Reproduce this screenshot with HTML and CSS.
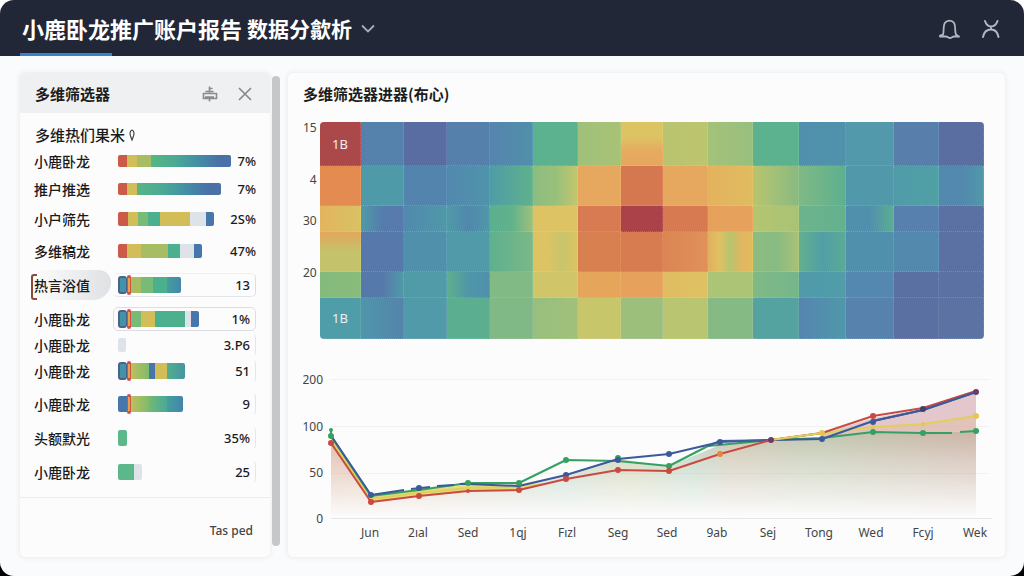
FILE: index.html
```html
<!DOCTYPE html>
<html lang="zh-CN">
<head>
<meta charset="utf-8">
<meta name="viewport" content="width=device-width, initial-scale=1">
<title>小鹿卧龙推广账户报告</title>
<link rel="stylesheet" href="styles.css">
</head>
<body>
<div class="app">
  <header class="topbar">
    <h1 class="topbar-title"><span>小鹿卧龙推广账户报告</span><span class="topbar-sub">数据分歙析</span></h1>
    <button class="icon-button" type="button" aria-label="切换报告">
      <svg width="16" height="16" viewBox="0 0 16 16"><path d="M2 5.5l6 6 6-6" fill="none" stroke="#a9acb8" stroke-width="1.8"/></svg>
    </button>
    <div class="topbar-actions">
      <button class="icon-button" type="button" aria-label="通知">
        <svg width="24" height="24" viewBox="0 0 24 24" fill="none" stroke="#b3b5c0" stroke-width="1.8" stroke-linejoin="round" stroke-linecap="round"><path d="M6 18.500C7.200 16 5.800 10 8 6.800C10 3.800 15 3.800 17 6.800C19 10 17.500 16 19 18.500L22 20.800M6 18.500L3 19.500V20.500H9C10.500 20.500 11.500 22 13 22S15.500 20.500 17 20.500H22"/></svg>
      </button>
      <button class="icon-button" type="button" aria-label="账户">
        <svg width="24" height="24" viewBox="0 0 24 24" fill="none" stroke="#b3b5c0" stroke-width="2" stroke-linecap="round"><path d="M6 5C7 8 9.500 10.500 12 10.500C15 10.500 17.500 8 18.500 5M12 10.500v3M4 21C5 15.500 8 13.500 12 13.500S18.500 15.500 19.500 21"/></svg>
      </button>
    </div>
  </header>

  <main class="content">
    <aside class="panel filter">
      <header class="filter-head">
        <h2 class="panel-title">多维筛选器</h2>
        <button class="icon-button" type="button" aria-label="清除">
          <svg width="18" height="18" viewBox="0 0 18 18" fill="none" stroke="#8a8b8d" stroke-width="1.600"><path d="M8.500 1.500v6M4.500 6.500h8M8.500 3.500h3M2.500 8.500h13v5h-13zM4 12h9M8.500 14v2.500"/></svg>
        </button>
        <button class="icon-button" type="button" aria-label="关闭">
          <svg width="16" height="16" viewBox="0 0 16 16" stroke="#86878a" stroke-width="1.600"><path d="M2 2l12 12M14 2L2 14"/></svg>
        </button>
      </header>
      <h3 class="filter-group">多维热们果米 <svg width="8" height="12" viewBox="0 0 8 12" fill="none" stroke="#444" stroke-width="1.200"><path d="M4 1C6 2 6.500 4 5.500 7L4 11L2.500 7C1.500 4 2 2 4 1z"/></svg></h3>
      <ul class="rows">
        <li class="row row-short"><span class="row-label">小鹿卧龙</span><span class="bar bar-thin"><i class="seg w9 red"></i><i class="seg w10 yellow"></i><i class="seg w14 olive"></i><i class="seg w80 ramp"></i></span><span class="row-value">7%</span></li>
        <li class="row row-short"><span class="row-label">推户推选</span><span class="bar bar-thin"><i class="seg w9 red"></i><i class="seg w10 yellow"></i><i class="seg w84 ramp"></i></span><span class="row-value">7%</span></li>
        <li class="row"><span class="row-label">小户筛先</span><span class="bar bar-mid"><i class="seg w10 red"></i><i class="seg w10 yellow"></i><i class="seg w10 green"></i><i class="seg w12 teal"></i><i class="seg w30 yellow"></i><i class="seg w16 mist"></i><i class="seg w8 blue"></i></span><span class="row-value">2S%</span></li>
        <li class="row"><span class="row-label">多维稿龙</span><span class="bar bar-mid"><i class="seg w9 red"></i><i class="seg w14 yellow"></i><i class="seg w27 olive"></i><i class="seg w12 teal"></i><i class="seg w14 mist"></i><i class="seg w8 blue"></i></span><span class="row-value">47%</span></li>
        <li class="row row-tall"><span class="row-label row-label-active">热言浴值</span><span class="field field-open"><span class="bar bar-thick"><i class="seg w9 sea framed"></i><i class="seg w4 marker"></i><i class="seg w10 olive"></i><i class="seg w12 green"></i><i class="seg w14 teal"></i><i class="seg w14 deep"></i></span><span class="row-value">13</span></span></li>
        <li class="row"><span class="row-label">小鹿卧龙</span><span class="field field-boxed"><span class="bar bar-thick"><i class="seg w9 sea framed"></i><i class="seg w4 marker"></i><i class="seg w10 green"></i><i class="seg w14 yellow"></i><i class="seg w30 teal"></i><i class="seg w6 mist"></i><i class="seg w8 blue"></i></span><span class="row-value">1%</span></span></li>
        <li class="row row-tight"><span class="row-label">小鹿卧龙</span><span class="field field-edge"><span class="bar bar-mid"><i class="seg w8 mist"></i></span><span class="row-value">3.P6</span></span></li>
        <li class="row"><span class="row-label">小鹿卧龙</span><span class="field field-edge"><span class="bar bar-thick"><i class="seg w9 sea framed"></i><i class="seg w4 marker"></i><i class="seg w18 grass"></i><i class="seg w6 blue"></i><i class="seg w12 yellow"></i><i class="seg w18 shore"></i></span><span class="row-value">51</span></span></li>
        <li class="row row-loose"><span class="row-label">小鹿卧龙</span><span class="field field-edge"><span class="bar bar-thick"><i class="seg w9 blue"></i><i class="seg w4 marker"></i><i class="seg w18 grass"></i><i class="seg w18 green-teal"></i><i class="seg w16 deep"></i></span><span class="row-value">9</span></span></li>
        <li class="row row-loose"><span class="row-label">头额默光</span><span class="field field-edge"><span class="bar bar-thick"><i class="seg w9 mint"></i></span><span class="row-value">35%</span></span></li>
        <li class="row row-loose"><span class="row-label">小鹿卧龙</span><span class="field field-edge"><span class="bar bar-thick"><i class="seg w16 mint"></i><i class="seg w8 mist"></i></span><span class="row-value">25</span></span></li>
      </ul>
      <footer class="filter-foot">Tas ped</footer>
    </aside>

    <div class="scroll-track" aria-hidden="true"><div class="scroll-thumb"></div></div>

    <section class="panel report">
      <h2 class="panel-title">多维筛选器进器(布心)</h2>
      <div class="heat">
        <div class="heat-axis"><span>15</span><span>4</span><span>30</span><span>20</span></div>
        <div class="heat-grid" id="heat"></div>
      </div>
      <svg class="trend" viewBox="303 366 689 180" role="img" aria-label="趋势">
        <defs>
          <linearGradient id="tint" x1="331" x2="976" y1="0" y2="0" gradientUnits="userSpaceOnUse">
            <stop offset="0" stop-color="#d9a892"/><stop offset=".2" stop-color="#cdb899"/><stop offset=".36" stop-color="#a9c9b4"/><stop offset=".46" stop-color="#c4c69b"/><stop offset=".56" stop-color="#a8c9b3"/><stop offset=".62" stop-color="#c5b8a0"/><stop offset=".75" stop-color="#b3bc9f"/><stop offset="1" stop-color="#c3a596"/>
          </linearGradient>
          <linearGradient id="fade" x1="0" x2="0" y1="430" y2="517" gradientUnits="userSpaceOnUse">
            <stop offset="0" stop-color="#fff" stop-opacity=".85"/><stop offset="1" stop-color="#fff" stop-opacity="0"/>
          </linearGradient>
          <mask id="fade-mask" maskUnits="userSpaceOnUse" x="303" y="366" width="689" height="180"><rect x="303" y="366" width="689" height="180" fill="url(#fade)"/></mask>
        </defs>
        <path class="rule" d="M331 379.500H989M331 426.500H989M331 473.500H989"/>
        <g mask="url(#fade-mask)"><path fill="url(#tint)" d="M331 436L371 495L419 488L468 483L519 484L566 475L618 459L669 466L720 445L771 440L822 438L873 432L923 433L976 431V518H331z"/></g>
        <path fill="#dcb9bf" fill-opacity=".8" d="M822 434L873 418L923 409L976 392V431L923 433L873 432L822 438z"/>
        <path fill="#ddb36e" fill-opacity=".2" d="M822 434L873 427L923 424L976 416V431L923 433L873 432L822 438z"/>
        <path fill="#e3dc7a" d="M331 438L371 497L419 490L468 485L519 485L545 483L519 490L468 491L419 496L371 502L331 443z"/>
        <path class="axis" d="M331 518.500H992"/>
        <path class="line" stroke="#e0cf5c" d="M331 440L371 499L419 493L468 488L519 487M771 440L822 433L873 427L923 424L976 416"/>
        <path class="line" stroke="#36a062" d="M331 430V436L371 496L419 490L468 483L519 483L566 460L618 461L669 466L708 446L771 440L822 438L873 432L923 433H952M960 432L976 431"/>
        <path class="line" stroke="#3c5a9a" d="M332 437L371 495L404 490M411 489L430 487M437 486L454 485M460 484L468 484L519 486L566 475L618 459L669 454L720 442L771 440L822 439L873 421L923 410L976 392"/>
        <path class="line" stroke="#3f5f9f" d="M708 446L720 441L771 440"/>
        <path class="line" stroke="#c84a40" d="M331 443L371 502L419 496L468 491L519 490L566 479L618 470L669 471L720 454L771 440L822 433L873 416L923 408L976 391"/>
        <path class="line" stroke="#3c5a9a" d="M873 421L923 410L976 392"/>
        <path class="line" stroke="#e0cf5c" d="M771 440L822 433"/>
        <g fill="#36a062"><circle cx="331" cy="430" r="2"/><circle cx="331" cy="436" r="3"/><circle cx="468" cy="483" r="3"/><circle cx="519" cy="483" r="3"/><circle cx="566" cy="460" r="3"/><circle cx="618" cy="458" r="3"/><circle cx="669" cy="466" r="3"/><circle cx="873" cy="432" r="3"/><circle cx="923" cy="433" r="3"/><circle cx="976" cy="431" r="3"/></g>
        <g fill="#3c5a9a"><circle cx="371" cy="495" r="3"/><circle cx="419" cy="488" r="3"/><circle cx="566" cy="475" r="3"/><circle cx="618" cy="460" r="3"/><circle cx="669" cy="454" r="3"/><circle cx="720" cy="442" r="3"/><circle cx="822" cy="439" r="3"/><circle cx="873" cy="422" r="3"/></g>
        <g fill="#c84a40"><circle cx="331" cy="443" r="3"/><circle cx="371" cy="502" r="3"/><circle cx="419" cy="496" r="3"/><circle cx="468" cy="491" r="2"/><circle cx="519" cy="490" r="3"/><circle cx="566" cy="479" r="3"/><circle cx="618" cy="470" r="3"/><circle cx="669" cy="471" r="3"/><circle cx="873" cy="416" r="3"/></g>
        <circle cx="720" cy="454" r="3" fill="#e08a3c"/>
        <g fill="#703a68"><circle cx="771" cy="440" r="3"/><circle cx="976" cy="392" r="3"/></g><circle cx="923" cy="409" r="3" fill="#43406e"/>
        <g fill="#e6c552"><circle cx="822" cy="433" r="3"/><circle cx="873" cy="427" r="2"/><circle cx="923" cy="424" r="2"/><circle cx="976" cy="416" r="3"/></g>
        <g class="tick tick-y"><text x="323" y="384">200</text><text x="323" y="431">100</text><text x="323" y="477">50</text><text x="323" y="523">0</text></g>
        <g class="tick tick-x"><text x="370" y="537">Jun</text><text x="418" y="537">2ıal</text><text x="468" y="537">Sed</text><text x="518" y="537">1qj</text><text x="567" y="537">Fızl</text><text x="618" y="537">Seg</text><text x="667" y="537">Sed</text><text x="717" y="537">9ab</text><text x="768" y="537">Sej</text><text x="819" y="537">Tong</text><text x="871" y="537">Wed</text><text x="923" y="537">Fcyj</text><text x="975" y="537">Wek</text></g>
      </svg>
    </section>
  </main>
</div>
<script src="heatmap.js"></script>
</body>
</html>
```
FILE: styles.css
```css
* { box-sizing: border-box; }

html {
  background: linear-gradient(#fff 50%, #000 50%);
}

body {
  margin: 0;
  font-family: "Noto Sans", "Noto Sans CJK SC", sans-serif;
  color: #1a1a1a;
}

h1, h2, h3, ul { margin: 0; padding: 0; }

.app {
  min-height: 100vh;
  border-radius: 14px;
  overflow: hidden;
  background: #fafbfc;
  display: flex;
  flex-direction: column;
}

.icon-button {
  display: flex;
  padding: 0;
  border: 0;
  background: none;
  cursor: pointer;
}

/* Top bar */
.topbar {
  position: relative;
  display: flex;
  align-items: center;
  gap: 8px;
  height: 56px;
  padding: 0 21px 0 22px;
  background: #222737;
}

.topbar::after {
  content: "";
  position: absolute;
  left: 20px;
  bottom: 0;
  width: 92px;
  height: 3px;
  background: #3583cf;
}

.topbar-title {
  display: flex;
  align-items: center;
  gap: 5px;
  font-family: "Noto Sans CJK SC", sans-serif;
  font-size: 22px;
  line-height: 32px;
  font-weight: 700;
  color: #fff;
}

.topbar-sub { font-size: 21px; }

.topbar-actions {
  display: flex;
  gap: 18px;
  margin-left: auto;
}

/* Page body */
.content {
  flex: 1;
  display: flex;
  align-items: stretch;
  padding: 16px 18px 18px 19px;
}

.panel {
  background: #fcfcfc;
  border: 1px solid #f1f2f3;
  border-radius: 6px;
  box-shadow: 0 0 5px rgba(40, 50, 70, .07);
}

.panel-title {
  font-family: "Noto Sans CJK SC", sans-serif;
  font-size: 15px;
  line-height: 20px;
  font-weight: 700;
  color: #1c1c1c;
}

/* Filter panel */
.filter {
  flex: none;
  width: 252px;
  display: flex;
  flex-direction: column;
  overflow: hidden;
}

.filter-head {
  display: flex;
  align-items: center;
  gap: 18px;
  height: 40px;
  padding: 2px 17px 0 15px;
  background: #eff0f1;
}

.filter-head .panel-title { margin-right: auto; }

.filter-group {
  padding: 12px 15px 2px;
  font-family: "Noto Sans CJK SC", sans-serif;
  font-size: 15px;
  line-height: 20px;
  font-weight: 500;
}

.rows {
  list-style: none;
  padding: 0 14px 8px 14px;
}

.row {
  display: flex;
  align-items: center;
  height: 32px;
}

.row-short { height: 28px; }
.row-tall { height: 36px; }
.row-tight { height: 20px; }
.row-loose { height: 34px; }

.row-label {
  position: relative;
  flex: none;
  width: 84px;
  font-family: "Noto Sans CJK SC", sans-serif;
  font-size: 14px;
  line-height: 20px;
  font-weight: 500;
  white-space: nowrap;
}

.row-label-active { z-index: 0; }

.row-label-active::before {
  content: "";
  position: absolute;
  z-index: -1;
  left: -3px;
  top: -1px;
  width: 4px;
  height: 22px;
  border: 2px solid #8a4a3c;
  border-right: 0;
  border-radius: 3px 0 0 3px;
}

.row-label-active::after {
  content: "";
  position: absolute;
  z-index: -1;
  left: 0;
  top: -5px;
  width: 77px;
  height: 30px;
  border-radius: 12px 15px 22px 12px;
  background: linear-gradient(90deg, rgba(225, 227, 229, 0), #dfe1e4);
}

.field {
  flex: 1;
  display: flex;
  align-items: center;
  height: 24px;
  margin-left: -5px;
  padding: 0 5px 0 4px;
  border: 1px solid transparent;
  border-radius: 5px;
}

.field-boxed { border-color: #dcdee3; }
.field-open { border-color: #eef0f2 #dcdee3 #e3e5e8 transparent; }
.field-edge { border-right-color: #e4e6e9; }

.row-value {
  margin-left: auto;
  font-size: 13px;
  line-height: 18px;
  font-weight: 500;
}

.bar {
  display: flex;
  align-items: center;
}

.seg { display: block; }
.bar-thin .seg { height: 12px; }
.bar-mid .seg { height: 14px; }
.bar-thick .seg { height: 16px; }
.seg:first-child { border-radius: 2px 0 0 2px; }
.seg:last-child { border-radius: 0 2px 2px 0; }
.seg:only-child { border-radius: 2px; }

.bar-thick .framed {
  height: 18px;
  border: 2px solid #4f5f8c;
  border-right-width: 1px;
  border-radius: 3px;
}

.bar-thick .marker {
  height: 20px;
  background: #dfa348;
  border: 1px solid #d2504a;
  border-width: 3px 1px;
  border-radius: 3px;
}

.w4 { width: 4px; }
.w6 { width: 6px; }
.w8 { width: 8px; }
.w9 { width: 9px; }
.w10 { width: 10px; }
.w12 { width: 12px; }
.w14 { width: 14px; }
.w16 { width: 16px; }
.w18 { width: 18px; }
.w27 { width: 27px; }
.w30 { width: 30px; }
.w80 { width: 80px; }
.w84 { width: 84px; }

.red { background: #cb5a46; }
.yellow { background: #d3bd59; }
.olive { background: #a7bd64; }
.green { background: #77bb76; }
.teal { background: #4cb08f; }
.mint { background: #5cb88a; }
.sea { background: #3f95a5; }
.deep { background: linear-gradient(90deg, #459e9e, #4385ac); }
.blue { background: #4776aa; }
.mist { background: #dde3e8; }
.grass { background: linear-gradient(90deg, #bec05b, #7fbb6c); }
.shore { background: linear-gradient(90deg, #51b188, #4694a5); }
.green-teal { background: linear-gradient(90deg, #71b975, #4aa895); }
.ramp { background: linear-gradient(90deg, #58b584, #4aaa94 30%, #438da6 60%, #4a70a8 85%); }

.filter-foot {
  margin-top: auto;
  padding: 23px 17px 16px;
  border-top: 1px solid #ebecee;
  font-size: 12px;
  line-height: 20px;
  font-weight: 500;
  text-align: right;
  color: #444;
}

.scroll-track {
  flex: none;
  width: 8px;
  margin: 4px 7px 12px 1px;
  border-radius: 4px;
  background: #f0f1f2;
}

.scroll-thumb {
  height: 100%;
  border-radius: 4px;
  background: #c5c7c9;
}

/* Report panel */
.report {
  flex: 1;
  min-width: 0;
  display: flex;
  flex-direction: column;
  padding: 11px 13px 11px 15px;
}

.heat {
  display: flex;
  margin: 18px 8px 27px 0;
}

.heat-axis {
  flex: none;
  display: grid;
  grid-template-rows: 52fr 41fr 52fr 72fr;
  width: 17px;
  padding-right: 5px;
  font-size: 12px;
  line-height: 12px;
  color: #444;
}

.heat-axis span { justify-self: end; }

.heat-grid {
  flex: 1;
  display: grid;
  grid-template-columns: 41fr 43fr 43fr 43fr 43fr 45fr 43fr 43fr 45fr 45fr 46fr 47fr 48fr 45fr 45fr;
  grid-template-rows: 44px 40px 26px 40px 26px 41px;
  border-radius: 4px;
  overflow: hidden;
}

.heat-cell {
  display: flex;
  align-items: center;
  justify-content: center;
  border: 0 dotted rgba(255, 255, 255, .18);
  border-width: 0 1px 1px 0;
  font-size: 13px;
  color: #eee;
}

.trend {
  display: block;
  width: 100%;
  height: auto;
}

.rule { fill: none; stroke: #f0f1f2; }
.axis { fill: none; stroke: #e6e7e8; }
.line { fill: none; stroke-width: 2; stroke-linejoin: round; }
.tick { font-size: 12px; fill: #444; }
.tick-y { text-anchor: end; }
.tick-x { text-anchor: middle; }
```
FILE: heatmap.js
```js
// Each cell lists its colours from left to right; a leading "v" runs them top to bottom.
const rows = [
  ["#ab4849", "#5582ac", "#5a6da3", "#5580ac", "#5585ae #5090aa", "#5cb18e", "#a0c17a #a8c275", "v #dcc465 #dcc465 #e6aa60 #e6a75e", "#b9c46f #bdc56e", "#a4c279 #98bf7e", "#5cb18f", "#5090ae #5092ab", "#529aab", "#587fac", "#5b6ea1"],
  ["#e38b50", "#4f9aa9", "#5284ad", "#5288ae #4f94aa", "#4f9da5 #60b18c", "#8dbc80 #98c07c #c4c66c", "#e6a75e", "#d6784f", "#e6a75e", "#e4b25e #e0bc60", "#b9c56e #88ba82", "#80b985 #5cb08f", "#5098aa", "#519ba9 #50a0a4", "#5289ad #5288ad #5099aa"],
  ["#e3b45d #d8c264", "#4f9ba8 #557cad #5879ab", "#5288ae #4f99a8", "#509aa8 #5088ac #4f98a9", "#5cb08f #60b18c #a0c07a", "#ddc363", "#d87b52", "#ab424a", "#d87a51", "#e6a25c", "#b5c570 #a8c375", "#6cb48c #64b18e", "#5190ad #5190ad #5cae90", "#5880ae", "#5b71a3"],
  ["v #e3a75d #c4c36b #c4c36b", "#5678ab", "#5190ab", "#509aaa", "#5db08f #7cb886", "#ddc364 #ddc364 #c8c56b #dcc464", "#d98050", "#d77b50", "#dc8554 #e0915a", "#e0af60 #e0c063 #b8c46e #e3b560 #dfbd60", "#8cbc80 #88bb82 #aac276", "#63b08e #529ea6 #5aac94", "#5190ad", "#5489ae", "#5b71a3"],
  ["#84bb7c #88bb7c", "#5679ab #5679ab #509aa8", "#519ba9", "#60b08c #4f96a9 #5090ab", "#82ba85", "#d0c568", "#e5a65b", "#e6a25c", "#dfbd62 #dfc163", "#acc476", "#80b985 #74b68b", "#509aab #519da8", "#5588b0", "#5a70a3", "#5b71a3"],
  ["#4f9da8", "#4f97aa #5583ab", "#509aaa", "#5bae90", "#80b985", "#98bf7e #a0c17a", "#c8c66b", "#9cc07c", "#b9c570", "#86ba84", "#55a3a0", "#5585b0 #5098aa", "#5782ad", "#5a70a3", "#5b72a3"]
];

const labels = { "0-0": "1B", "5-0": "1B" };
const grid = document.getElementById("heat");

rows.forEach((row, r) => {
  row.forEach((spec, c) => {
    const vertical = spec.startsWith("v ");
    const stops = spec.replace("v ", "").split(" ");
    const cell = document.createElement("div");
    cell.className = "heat-cell";
    cell.style.background = stops.length === 1
      ? stops[0]
      : `linear-gradient(${vertical ? "180deg" : "90deg"}, ${stops.join(", ")}) border-box`;
    cell.textContent = labels[`${r}-${c}`] || "";
    grid.appendChild(cell);
  });
});
```
